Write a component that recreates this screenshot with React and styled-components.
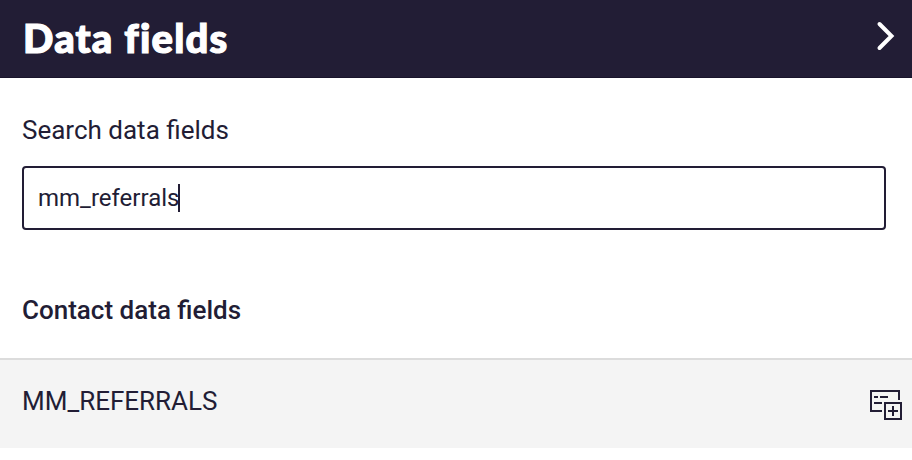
import React from "react";
import styled, { createGlobalStyle } from "styled-components";

const GlobalStyle = createGlobalStyle`
  * {
    box-sizing: border-box;
  }
  body {
    margin: 0;
    background-color: #fff;
    color: #221d35;
    font-family: Roboto, sans-serif;
  }
`;

const Panel = styled.div`
  width: 912px;
  height: 460px;
  overflow: hidden;
`;

const Header = styled.header`
  height: 78px;
  padding: 0 16px 0 23px;
  display: flex;
  align-items: center;
  justify-content: space-between;
  background-color: #221d35;
  border-bottom: 1px solid #19142b;
`;

const Title = styled.h1`
  margin: 0 0 2px;
  color: #fff;
  font-family: Lato, sans-serif;
  font-size: 40px;
  font-weight: 900;
  line-height: 48px;
  letter-spacing: 1.2px;
  -webkit-text-stroke: 1.2px #fff;
`;

const IconButton = styled.button`
  display: flex;
  padding: 0;
  border: none;
  background: none;
  color: inherit;
  cursor: pointer;
`;

const CloseButton = styled(IconButton)`
  color: #fff;
  margin-bottom: 5px;
`;

const Search = styled.div`
  padding: 36px 26px 0 22px;
`;

const Label = styled.div`
  font-size: 26px;
  line-height: 32px;
`;

const Field = styled.div`
  height: 64px;
  margin-top: 20px;
  padding: 0 14px;
  display: flex;
  align-items: center;
  border: 2px solid #221d35;
  border-radius: 4px;
  cursor: text;
`;

const Value = styled.span`
  font-size: 24px;
  line-height: 28px;
`;

const Caret = styled.span`
  width: 2px;
  height: 28px;
  margin-left: -1px;
  background-color: #221d35;
`;

const GroupTitle = styled.h2`
  margin: 64px 0 0;
  padding: 0 22px;
  font-size: 26px;
  font-weight: 500;
  line-height: 32px;
`;

const Item = styled.div`
  height: 90px;
  margin-top: 32px;
  padding: 0 10px 0 22px;
  display: flex;
  align-items: center;
  justify-content: space-between;
  background-color: #f4f4f4;
  border-top: 2px solid #dcdcdc;
`;

const ItemName = styled.span`
  margin-bottom: 6px;
  font-size: 26px;
  line-height: 32px;
`;

const InsertButton = styled(IconButton)`
  margin-bottom: -2px;
`;

const ChevronIcon = () => (
  <svg width="20" height="30" viewBox="0 0 20 30" fill="none">
    <path
      d="M3.5 3L15.5 15L3.5 27"
      stroke="currentColor"
      strokeWidth="4"
      strokeLinecap="round"
    />
  </svg>
);

const InsertFieldIcon = () => (
  <svg width="32" height="30" viewBox="0 0 32 30" fill="none">
    <path
      d="M12 21H1V1H29V10M4 7H8M10 7H18M4 13H12M15 13H31V29H15ZM23 16V26M18 21H28"
      stroke="currentColor"
      strokeWidth="2"
    />
  </svg>
);

const fields = ["MM_REFERRALS"];

const App = () => {
  return (
    <>
      <GlobalStyle />
      <Panel>
        <Header>
          <Title>Data fields</Title>
          <CloseButton aria-label="Collapse">
            <ChevronIcon />
          </CloseButton>
        </Header>
        <Search>
          <Label>Search data fields</Label>
          <Field role="textbox">
            <Value>mm_referrals</Value>
            <Caret />
          </Field>
        </Search>
        <GroupTitle>Contact data fields</GroupTitle>
        {fields.map((name) => (
          <Item key={name}>
            <ItemName>{name}</ItemName>
            <InsertButton aria-label="Insert field">
              <InsertFieldIcon />
            </InsertButton>
          </Item>
        ))}
      </Panel>
    </>
  );
};

export default App;
